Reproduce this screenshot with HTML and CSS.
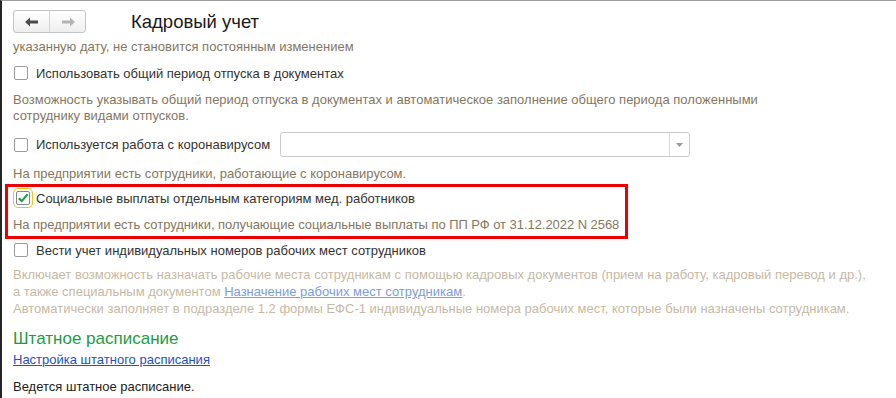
FILE: index.html
```html
<!DOCTYPE html>
<html lang="ru">
<head>
    <meta charset="UTF-8">
    <title>Кадровый учет</title>
    <link rel="stylesheet" href="styles.css">
</head>
<body>
    <div class="window">
        <div class="header">
            <div class="nav">
                <button class="nav-btn">
                    <svg viewBox="0 0 14 10" class="arrow"><path d="M0 5 L5 0.5 L5 3.5 L13 3.5 L13 6.5 L5 6.5 L5 9.5 Z" fill="#4a4a4a"/></svg>
                </button>
                <button class="nav-btn">
                    <svg viewBox="0 0 14 10" class="arrow"><path d="M14 5 L9 0.5 L9 3.5 L1 3.5 L1 6.5 L9 6.5 L9 9.5 Z" fill="#b4b4b4"/></svg>
                </button>
            </div>
            <h1 class="title">Кадровый учет</h1>
        </div>

        <div class="content">
            <p class="note first">указанную дату, не становится постоянным изменением</p>

            <label class="check-row">
                <span class="box"></span>
                <span>Использовать общий период отпуска в документах</span>
            </label>
            <p class="note">Возможность указывать общий период отпуска в документах и автоматическое заполнение общего периода положенными<br>сотруднику видами отпусков.</p>

            <div class="check-row field-row">
                <span class="box"></span>
                <span>Используется работа с коронавирусом</span>
                <div class="select">
                    <span class="select-btn"><svg viewBox="0 0 7 4" class="tri"><path d="M0 0 L7 0 L3.5 4 Z" fill="#9a9a9a"/></svg></span>
                </div>
            </div>
            <p class="note after-field">На предприятии есть сотрудники, работающие с коронавирусом.</p>

            <div class="highlight">
                <label class="check-row">
                    <span class="box checked">
                        <svg viewBox="0 0 14 14" class="tick"><path d="M2 7.2 L5.6 10.6 L12.4 2.6" fill="none" stroke="#1b9a47" stroke-width="2.4"/></svg>
                    </span>
                    <span>Социальные выплаты отдельным категориям мед. работников</span>
                </label>
                <p class="note">На предприятии есть сотрудники, получающие социальные выплаты по ПП РФ от 31.12.2022 N 2568</p>
            </div>

            <label class="check-row">
                <span class="box"></span>
                <span>Вести учет индивидуальных номеров рабочих мест сотрудников</span>
            </label>
            <p class="note disabled">Включает возможность назначать рабочие места сотрудникам с помощью кадровых документов (прием на работу, кадровый перевод и др.),<br>а также специальным документом <a href="#" class="link-dim">Назначение рабочих мест сотрудникам</a>.<br>Автоматически заполняет в подразделе 1.2 формы ЕФС-1 индивидуальные номера рабочих мест, которые были назначены сотрудникам.</p>

            <h2 class="group-title">Штатное расписание</h2>
            <a href="#" class="link">Настройка штатного расписания</a>
            <p class="text">Ведется штатное расписание.<br>Используется история изменения штатного расписания.</p>
        </div>
    </div>
</body>
</html>
```

FILE: styles.css
```css
* {
    margin: 0;
    padding: 0;
    box-sizing: border-box;
}

body {
    font-family: "Liberation Sans", Arial, sans-serif;
    font-size: 13px;
    color: #333333;
    background: #ffffff;
    overflow: hidden;
}

.window {
    height: 398px;
    border-top: 1px solid #9c9c9c;
    border-left: 2px solid #262626;
    overflow: hidden;
}

.header {
    display: flex;
    align-items: center;
    padding: 9px 0 0 11px;
}

.nav {
    display: flex;
    width: 73px;
    height: 23px;
    border: 1px solid #c4c4c4;
    border-radius: 3px;
    background: linear-gradient(#ffffff, #eeeeee);
}

.nav-btn {
    flex: 1;
    display: flex;
    align-items: center;
    justify-content: center;
    border: none;
    background: transparent;
}

.nav-btn + .nav-btn {
    border-left: 1px solid #d4d4d4;
}

.arrow {
    width: 14px;
    height: 10px;
}

.title {
    margin-left: 45px;
    font-size: 18.5px;
    font-weight: normal;
    color: #1a1a1a;
}

.content {
    padding-left: 11px;
}

.note {
    color: #857761;
    line-height: 16px;
    margin-top: 8px;
}

.note.first {
    margin-top: 6px;
}

.note.after-field {
    margin-top: 9px;
}

.note.disabled {
    color: #c7b9a4;
    line-height: 17px;
    margin-top: 5px;
}

.check-row {
    display: flex;
    align-items: center;
    height: 22px;
    margin-top: 7px;
}

.check-row .box {
    width: 14px;
    height: 14px;
    margin-left: 1px;
    margin-right: 8px;
    border: 1px solid #9a9a9a;
    border-radius: 2px;
    background: #ffffff;
    flex-shrink: 0;
}

.box.checked {
    outline: 1px solid #f0c419;
    outline-offset: 2px;
    margin-left: 3px;
    margin-right: 6px;
    border-color: #888888;
    display: flex;
    align-items: center;
    justify-content: center;
}

.tick {
    width: 14px;
    height: 14px;
}

.field-row {
    height: 25px;
    margin-top: 8px;
}

.select {
    position: relative;
    width: 410px;
    height: 25px;
    margin-left: 10px;
    border: 1px solid #cccccc;
    border-radius: 3px;
}

.select-btn {
    position: absolute;
    right: 0;
    top: 0;
    bottom: 0;
    width: 20px;
    border-left: 1px solid #d6d6d6;
    display: flex;
    align-items: center;
    justify-content: center;
}

.tri {
    width: 7px;
    height: 4px;
}

.highlight {
    width: 623px;
    margin: 2px 0 0 -8px;
    padding: 0 0 3px 5px;
    border: 3px solid #ec0000;
}

.highlight .check-row {
    margin-top: 0;
}

.highlight .note {
    margin-top: 8px;
    letter-spacing: -0.05px;
}

.highlight + .check-row {
    margin-top: 0;
}

.link-dim {
    color: #7d9ddc;
}

.group-title {
    margin-top: 12px;
    font-size: 17px;
    font-weight: normal;
    line-height: 20px;
    color: #1d9c45;
}

.link {
    display: inline-block;
    margin-top: 3px;
    line-height: 16px;
    color: #2451c2;
}

.text {
    margin-top: 11px;
    line-height: 16px;
    color: #222222;
}
```
